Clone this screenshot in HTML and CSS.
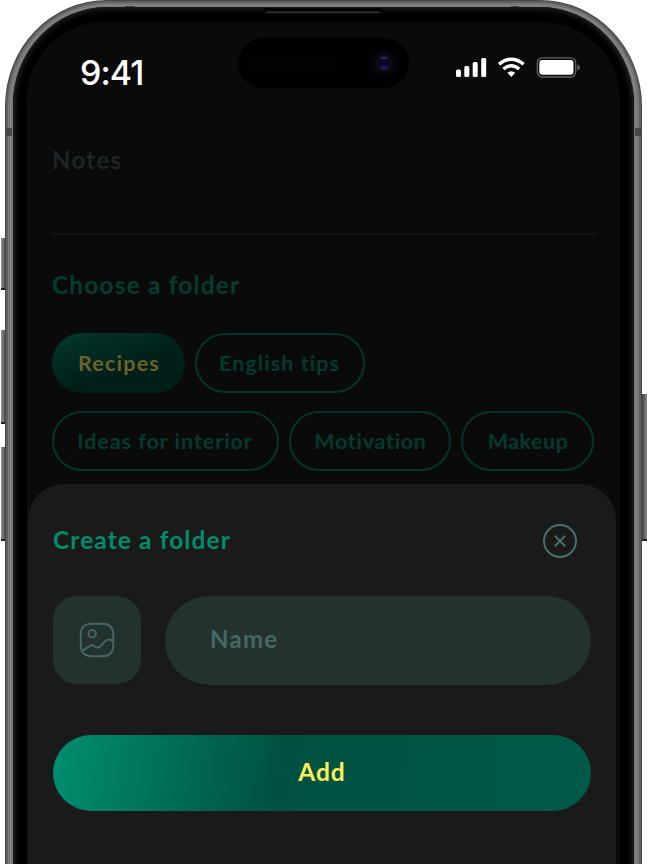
FILE: index.html
```html
<!DOCTYPE html>
<html lang="en">
<head>
<meta charset="utf-8">
<title>Create a folder</title>
<link rel="stylesheet" href="styles.css">
</head>
<body>
<div class="device">
  <i class="key key-action"></i><i class="key key-up"></i><i class="key key-down"></i><i class="key key-power"></i>
  <div class="frame">
    <div class="bezel">
      <main class="screen">
        <header class="status">
          <span class="time">9:41</span>
          <div class="island"><i class="sensor"></i><i class="lens"></i></div>
          <svg class="signals" width="124" height="22" viewBox="0 0 124 22">
            <g fill="#fff">
              <rect x="0" y="12.5" width="5" height="7.5" rx="1.5"/><rect x="8.3" y="9" width="5" height="11" rx="1.5"/>
              <rect x="16.7" y="5" width="5" height="15" rx="1.5"/><rect x="25.2" y="1" width="5" height="19" rx="1.5"/>
              <path d="M55.3 20 51.4 15.8Q55.3 12.8 59.2 15.8Z"/>
            </g>
            <g fill="none" stroke="#fff" stroke-width="3.4"><path d="M43 7.2Q55.3-2.8 67.6 7.2"/><path d="M47.4 12Q55.3 5.4 63.2 12"/></g>
            <rect x="81.3" y=".8" width="38.4" height="19.2" rx="5" fill="none" stroke="#636363" stroke-width="1.3"/>
            <rect x="83.3" y="3" width="34.2" height="14.8" rx="3" fill="#fff"/>
            <path d="M121.3 7.5Q124 8.2 124 10.5T121.3 13.5Z" fill="#636363"/>
          </svg>
        </header>
        <section class="note">
          <p class="notes">Notes</p>
          <h2 class="choose">Choose a folder</h2>
          <div class="chips">
            <span class="chip active c1"><b>Recipes</b></span><span class="chip c2"><b>English tips</b></span>
          </div>
          <div class="chips">
            <span class="chip c3"><b>Ideas for interior</b></span><span class="chip c4"><b>Motivation</b></span><span class="chip c5"><b>Makeup</b></span>
          </div>
        </section>
        <section class="sheet">
          <div class="sheet-head">
            <h2>Create a folder</h2>
            <svg width="36" height="36" viewBox="0 0 36 36" fill="none" stroke="#49706d" stroke-width="2" stroke-linecap="round"><circle cx="18" cy="18" r="16"/><path d="m13.2 13.2 9.6 9.6m0-9.6-9.6 9.6"/></svg>
          </div>
          <div class="fields">
            <div class="picture"><svg width="36" height="36" viewBox="0 0 36 36" fill="none" stroke="#456866" stroke-width="1.9" stroke-linecap="round" stroke-linejoin="round"><path d="M1.700 14V22C1.700 31 5 34.300 14 34.300H22C31 34.300 34.300 31 34.300 22V14C34.300 5 31 1.700 22 1.700H14C5 1.700 1.700 5 1.700 14Z"/><circle cx="13.200" cy="11.700" r="3.700"/><path d="M3.500 28.500C5.500 27.500 7 26.500 8.600 25.200 12.200 22.300 14 22.800 16 24.600 17.800 26.200 19.500 26 21.200 24.300L26.300 19.300C29.200 16.700 32 17.500 34 19.500"/></svg></div>
            <div class="name"><span>Name</span></div>
          </div>
          <div class="add"><span>Add</span></div>
        </section>
      </main>
    </div>
  </div>
  <i class="speaker"></i>
</div>
</body>
</html>
```
FILE: styles.css
```css
* { box-sizing: border-box; }
body { margin: 0; background: #fff; overflow: hidden; font-family: Lato, "Liberation Sans", sans-serif; }
h2, p { margin: 0; }
.device { position: relative; width: 647px; height: 864px; padding: 0 5px; overflow: hidden; }
.frame { position: relative; height: 1000px; border-radius: 102px 102px 0 0 / 106px 106px 0 0; padding: 7px 8px 0;
  background: linear-gradient(90deg, transparent 120px, #3c3c3c 120px 130px, transparent 130px 506px, #3c3c3c 506px 514px, transparent 514px) 0 0 / 100% 7px no-repeat, #777;
  box-shadow: inset 0 0 0 1px #484848, inset 0 0 0 3px #5f5f5f, inset 0 0 0 5px #777, inset 0 0 0 6px #888; }
.frame::before, .frame::after { content: ""; position: absolute; top: 128px; width: 7px; height: 8px; background: #484848; }
.frame::before { left: 0; }
.frame::after { right: 0; }
.bezel { position: relative; height: 993px; border-radius: 94px 94px 0 0 / 98px 98px 0 0; padding: 15px 14px 0; background: #000;
  box-shadow: inset 0 0 0 1px #191919, inset 0 0 6px 1px #303030; }
.screen { display: flex; flex-direction: column; height: 978px; border-radius: 78px 78px 0 0; background: #0a0a0a; overflow: hidden; padding-right: 4px; border-left: 1px solid #111; }
.status { display: flex; height: 106px; flex: none; }
.time { width: 210px; padding: 30px 0 0 52px; font: 500 34px/42px Inter, sans-serif; letter-spacing: -1px; color: #fff; }
.island { display: flex; align-items: center; justify-content: space-between; width: 171px; height: 50px; margin-top: 16px; padding: 0 11px; border-radius: 25px; background: #000; }
.sensor { width: 89px; height: 27px; border-radius: 14px; background: #020202; }
.lens { width: 28px; height: 28px; border-radius: 50%; background: radial-gradient(ellipse 5px 2px at 50% 32%, #33357c, transparent), radial-gradient(ellipse 5px 3px at 50% 66%, #261b87, transparent), radial-gradient(circle, #07072c 5px, #0d0e18 6px 8px, #08050a 9px); }
.signals { margin: 35px 0 0 47px; }
.note { padding-left: 24px; height: 357px; flex: none; }
.notes { width: 544px; height: 107px; padding-top: 17px; border-bottom: 2px solid #0d1715; font: 700 24px/30px Lato, sans-serif; letter-spacing: 1.3px; color: #1b2626; }
.choose { height: 98px; padding-top: 35px; font: 700 24.500px/30px Lato, sans-serif; letter-spacing: 1.150px; color: #033c30; }
.chips { display: flex; gap: 10px; height: 60px; margin-bottom: 18px; }
.chip { display: flex; align-items: center; justify-content: center; height: 60px; border: 2px solid #02352a; border-radius: 30px; color: #033a2f; font-size: 21.5px; letter-spacing: .7px; white-space: nowrap; }
.chip b { margin-right: -1px; }
.active { border: 0; background: linear-gradient(160deg, #02382c, #011e18 60%, #012019); color: #6c6228; }
.c1 { width: 133px; letter-spacing: 1.2px; } .c2 { width: 170px; letter-spacing: 1.050px; } .c3 { width: 227px; letter-spacing: .95px; } .c4 { width: 162px; } .c5 { width: 133px; letter-spacing: .5px; }
.c2 b, .c3 b { margin-left: -2px; }
.sheet { height: 515px; flex: none; margin-top: -1px; padding: 38px 25px 0; border-radius: 36px 36px 0 0; background: #1a1a1a; }
.sheet-head { display: flex; justify-content: space-between; height: 74px; padding-right: 13px; }
.sheet-head svg { margin-top: 1px; }
.sheet-head h2 { font: 700 24.500px/36px Lato, sans-serif; letter-spacing: 1.100px; color: #018c6d; }
.fields { display: flex; justify-content: space-between; height: 139px; }
.picture { display: flex; align-items: center; justify-content: center; width: 88px; height: 88px; border-radius: 24px; background: #23322f; }
.name { display: flex; align-items: center; width: 426px; height: 89px; padding: 0 0 4px 45px; border-radius: 45px; background: #23322f; color: #456866; font-weight: 700; font-size: 24px; letter-spacing: 1.300px; }
.add { display: flex; align-items: center; justify-content: center; height: 76px; padding-bottom: 3px; border-radius: 38px; background: linear-gradient(100deg, #008f70, #005141 42%, #005a48); color: #ffee5b; font-weight: 700; font-size: 24.500px; letter-spacing: .9px; }
.key { position: absolute; left: 1px; width: 5px; background: linear-gradient(90deg, #999, #3b3b3b); border-bottom: 2px solid #222; }
.key-action { top: 238px; height: 52px; }
.key-up { top: 330px; height: 94px; }
.key-down { top: 447px; height: 94px; }
.key-power { left: 641px; width: 6px; top: 394px; height: 147px; background: linear-gradient(90deg, #333, #888); }
.speaker { position: absolute; top: 8px; left: 263px; width: 120px; height: 5px; background: linear-gradient(#050505 60%, #494949); clip-path: polygon(0 0, 100% 0, 97% 100%, 3% 100%); }
```
